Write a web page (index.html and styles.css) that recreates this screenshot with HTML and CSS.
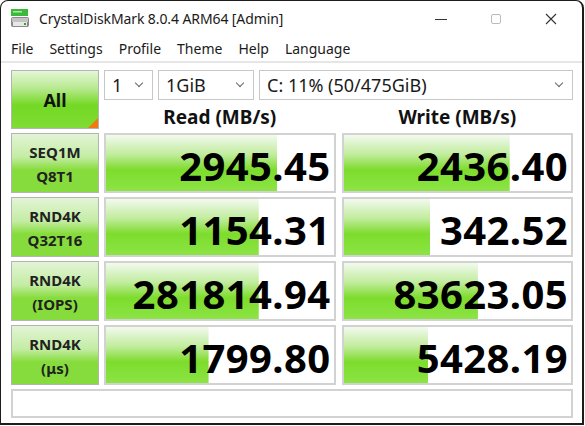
FILE: index.html
```html
<!DOCTYPE html>
<html>
<head>
<meta charset="utf-8">
<link rel="stylesheet" href="styles.css">
</head>
<body>
<div class="window">
  <div class="titlebar">
    <svg class="appicon" width="20" height="20" viewBox="0 0 20 20">
      <rect x="1" y="1" width="17" height="7" fill="#3cb83a"/>
      <rect x="3" y="3" width="9" height="1.5" fill="#a8e8a0"/>
      <rect x="1" y="9" width="18" height="10" rx="2" fill="#8a8a8a"/>
      <rect x="2" y="10" width="16" height="4" fill="#c4c4c4"/>
      <rect x="3" y="14" width="14" height="4" fill="#e8e8e8"/>
      <rect x="14" y="15" width="2" height="2" fill="#2fa82f"/>
    </svg>
    <span class="title">CrystalDiskMark 8.0.4 ARM64 [Admin]</span>
    <div class="controls">
      <svg width="12" height="12" viewBox="0 0 12 12"><line x1="0" y1="6.5" x2="12" y2="6.5" stroke="#333" stroke-width="1"/></svg>
      <svg width="12" height="12" viewBox="0 0 12 12"><rect x="1.5" y="1.5" width="9" height="9" rx="1.5" fill="none" stroke="#bbb" stroke-width="1"/></svg>
      <svg width="12" height="12" viewBox="0 0 12 12"><path d="M1 1 L11 11 M11 1 L1 11" stroke="#333" stroke-width="1.1"/></svg>
    </div>
  </div>
  <div class="menubar">
    <span>File</span><span>Settings</span><span>Profile</span><span>Theme</span><span>Help</span><span>Language</span>
  </div>
  <div class="main">
    <div class="top">
      <div class="allbtn">All</div>
      <div class="topright">
        <div class="selects">
          <div class="select s-count"><span>1</span><i class="chev"></i></div>
          <div class="select s-size"><span>1GiB</span><i class="chev"></i></div>
          <div class="select s-drive"><span>C: 11% (50/475GiB)</span><i class="chev"></i></div>
        </div>
        <div class="heads">
          <div class="head">Read (MB/s)</div>
          <div class="head">Write (MB/s)</div>
        </div>
      </div>
    </div>
    <div class="row">
      <div class="label">SEQ1M<br>Q8T1</div>
      <div class="val" style="--p:75%">2945.45</div>
      <div class="val" style="--p:73%">2436.40</div>
    </div>
    <div class="row">
      <div class="label">RND4K<br>Q32T16</div>
      <div class="val" style="--p:67%">1154.31</div>
      <div class="val" style="--p:38%">342.52</div>
    </div>
    <div class="row">
      <div class="label">RND4K<br>(IOPS)</div>
      <div class="val" style="--p:67%">281814.94</div>
      <div class="val" style="--p:59%">83623.05</div>
    </div>
    <div class="row">
      <div class="label">RND4K<br>(μs)</div>
      <div class="val" style="--p:45%">1799.80</div>
      <div class="val" style="--p:37%">5428.19</div>
    </div>
    <div class="comment"></div>
  </div>
</div>
</body>
</html>
```

FILE: styles.css
```css
html, body {
  margin: 0;
  padding: 0;
  background: #ffffff;
}
body {
  font-family: "Noto Sans", "Liberation Sans", sans-serif;
  color: #111;
}
.window {
  box-sizing: border-box;
  width: 584px;
  height: 425px;
  border: 1px solid #1c1c1c;
  border-right-width: 2px;
  border-bottom-width: 2px;
  border-radius: 8px 8px 0 0;
  background: #ffffff;
  display: flex;
  flex-direction: column;
  overflow: hidden;
}
.titlebar {
  height: 35px;
  display: flex;
  align-items: center;
  padding-left: 9px;
  flex-shrink: 0;
}
.appicon { margin-right: 9px; margin-top: -1px; }
.title {
  font-size: 14px;
  color: #1a1a1a;
  letter-spacing: -0.1px;
}
.controls {
  margin-left: auto;
  display: flex;
  gap: 43px;
  padding-right: 25px;
}
.menubar {
  height: 25px;
  display: flex;
  align-items: center;
  padding-left: 10px;
  font-size: 14px;
  color: #1a1a1a;
  flex-shrink: 0;
}
.menubar span { margin-right: 16px; }
.main {
  flex: 1;
  border-top: 2px solid #e6e6e6;
  padding: 7px 9px 0 10px;
  display: flex;
  flex-direction: column;
}
.top {
  display: flex;
  gap: 5px;
  height: 59px;
}
.allbtn {
  box-sizing: border-box;
  width: 88px;
  height: 59px;
  border: 1px solid #b4b4b4;
  background: linear-gradient(#e4f6d8 0%, #b8ea90 30%, #74d824 60%, #80dc34 100%);
  font-weight: 700;
  font-size: 18px;
  display: flex;
  align-items: center;
  justify-content: center;
  position: relative;
}
.allbtn::after {
  content: "";
  position: absolute;
  right: 0;
  bottom: 0;
  width: 0;
  height: 0;
  border-style: solid;
  border-width: 0 0 10px 10px;
  border-color: transparent transparent #f07a10 transparent;
}
.topright {
  flex: 1;
  display: flex;
  flex-direction: column;
}
.selects {
  display: flex;
  gap: 5px;
  height: 30px;
}
.select {
  box-sizing: border-box;
  height: 30px;
  border: 1px solid #c8c8c8;
  background: #fff;
  display: flex;
  align-items: center;
  padding-left: 7px;
  padding-right: 10px;
  font-size: 18px;
  color: #1a1a1a;
}
.select span { flex: 1; }
.s-count { width: 49px; }
.s-size { width: 96px; }
.s-drive { flex: 1; }
.chev {
  width: 5px;
  height: 5px;
  border-right: 1px solid #666;
  border-bottom: 1px solid #666;
  transform: rotate(45deg);
  margin-top: -4px;
}
.heads {
  flex: 1;
  display: flex;
  gap: 6px;
}
.head {
  flex: 1;
  text-align: center;
  font-weight: 700;
  font-size: 19px;
  line-height: 29px;
  padding-top: 3px;
}
.row {
  display: flex;
  gap: 5px;
  height: 60px;
  margin-top: 4px;
}
.row:first-of-type { margin-top: 5px; }
.label {
  box-sizing: border-box;
  width: 88px;
  border: 1px solid #b4b4b4;
  background: linear-gradient(#e2f4d6 0%, #c4eca4 40%, #86dc3c 62%, #86dc3c 100%);
  font-weight: 700;
  font-size: 15px;
  line-height: 24px;
  text-align: center;
  color: #222;
  display: flex;
  align-items: center;
  justify-content: center;
  padding-top: 1px;
}
.val {
  box-sizing: border-box;
  flex: 1;
  border: 2px solid #d2d2d2;
  background-color: #ffffff;
  background-image: linear-gradient(#f2faee 0%, #c0ec9c 35%, #7ddc2c 62%, #8ce444 100%);
  background-repeat: no-repeat;
  background-size: var(--p) 100%;
  font-weight: 700;
  font-size: 40px;
  line-height: 56px;
  text-align: right;
  padding-right: 3px;
  padding-top: 3px;
  color: #000;
  letter-spacing: 0.4px;
}
.val + .val { margin-left: 1px; }
.comment {
  box-sizing: border-box;
  height: 29px;
  margin-top: 4px;
  border: 2px solid #d2d2d2;
  background: #fff;
}
```
